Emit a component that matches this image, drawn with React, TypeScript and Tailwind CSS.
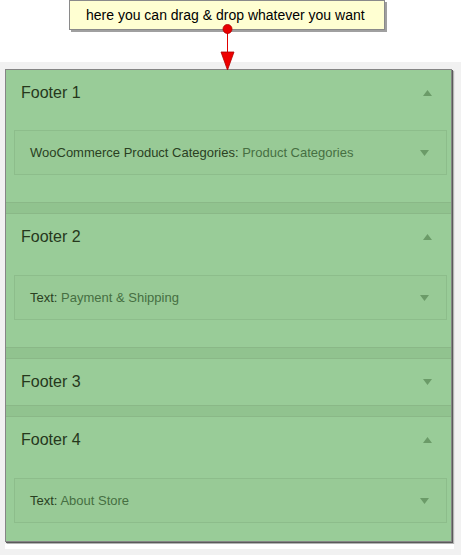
import type { ReactNode } from 'react';

interface SidebarProps {
  title: string;
  open: boolean;
  widget?: { name: string; title: string };
  gap?: string;
  bottom?: string;
}

function Arrow({ up }: { up?: boolean }) {
  return (
    <svg width="9" height="6" viewBox="0 0 9 6">
      {up ? (
        <polygon points="0,6 9,6 4.5,0" fill="#6b9b68" />
      ) : (
        <polygon points="0,0 9,0 4.5,6" fill="#6b9b68" />
      )}
    </svg>
  );
}

function Band() {
  return <div className="h-[12px] bg-[#91c38f] border-y border-[#8ab887]" />;
}

function Sidebar({ title, open, widget, gap = 'mt-[14px]', bottom = 'pb-[27px]' }: SidebarProps) {
  return (
    <div className={open ? bottom : ''}>
      <div className="h-[46px] flex items-center justify-between pl-[15px] pr-[19px]">
        <span className="text-[16px] text-[#26381c]">{title}</span>
        <Arrow up={open} />
      </div>
      {widget && (
        <div
          className={`${gap} ml-[8px] mr-[4px] h-[45px] border border-[#8dbd8b] bg-[#98ca96] flex items-center justify-between pl-[15px] pr-[17px]`}
        >
          <span className="text-[13px] text-[#2a4022]">
            {widget.name}:{' '}
            <span className="text-[#466f42]">{widget.title}</span>
          </span>
          <Arrow />
        </div>
      )}
    </div>
  );
}

function Callout({ children }: { children: ReactNode }) {
  return (
    <div className="absolute left-[69px] top-0 w-[316px] h-[30px] bg-[#ffffd2] border border-[#8a8a8a] shadow-[2px_2px_0_#a0a0a0] flex items-center pl-[16px] text-[14px] text-black">
      {children}
    </div>
  );
}

export default function App() {
  return (
    <div
      className="relative w-[461px] h-[555px] bg-white overflow-hidden"
      style={{ fontFamily: '"Liberation Sans", Arial, sans-serif' }}
    >
      <div className="h-[62px]" />
      <div className="h-[493px] bg-[#f1f1f1] pt-[7px] pl-[5px]">
        <div className="w-[447px] border border-[#858585] bg-[#99cc98] shadow-[1px_1px_0_#5a5a5a,2px_2px_1px_rgba(0,0,0,0.25)]">
          <Sidebar
            title="Footer 1"
            open
            widget={{ name: 'WooCommerce Product Categories', title: 'Product Categories' }}
          />
          <Band />
          <Sidebar
            title="Footer 2"
            open
            gap="mt-[15px]"
            widget={{ name: 'Text', title: 'Payment & Shipping' }}
          />
          <Band />
          <Sidebar title="Footer 3" open={false} />
          <Band />
          <Sidebar
            title="Footer 4"
            open
            gap="mt-[15px]"
            bottom="pb-[18px]"
            widget={{ name: 'Text', title: 'About Store' }}
          />
        </div>
        <div className="w-[449px] h-[5px] mt-[2px] bg-white" />
      </div>

      <Callout>here you can drag &amp; drop whatever you want</Callout>
      <svg className="absolute left-[217px] top-[23px]" width="22" height="48" viewBox="0 0 22 48">
        <line x1="10.5" y1="6" x2="10.5" y2="30" stroke="#e00000" strokeWidth="1" />
        <circle cx="10.5" cy="6" r="4.5" fill="#e80000" stroke="#b00000" strokeWidth="0.8" />
        <polygon points="4,29 17,29 10.5,47" fill="#ee0000" stroke="#b00000" strokeWidth="0.8" />
      </svg>
    </div>
  );
}
